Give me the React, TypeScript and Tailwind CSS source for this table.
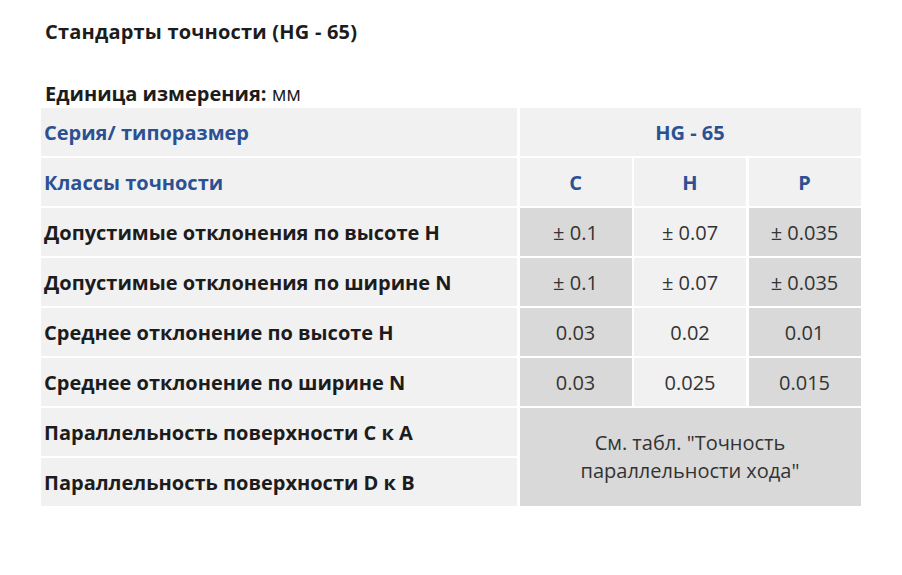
const labels = [
  "Допустимые отклонения по высоте H",
  "Допустимые отклонения по ширине N",
  "Среднее отклонение по высоте H",
  "Среднее отклонение по ширине N",
];

const values = [
  ["± 0.1", "± 0.07", "± 0.035"],
  ["± 0.1", "± 0.07", "± 0.035"],
  ["0.03", "0.02", "0.01"],
  ["0.03", "0.025", "0.015"],
];

const light = "bg-[#f1f1f1]";
const dark = "bg-[#d9d9d9]";

export default function App() {
  return (
    <div
      className="w-[902px] h-[575px] bg-white text-[#1c1c1c]"
      style={{ fontFamily: "'Open Sans', Lato, sans-serif" }}
    >
      <div className="pl-[45px] pt-[20px] text-[20px]">
        <h2 className="font-bold leading-[24px] tracking-[0.2px]">
          Стандарты точности (HG - 65)
        </h2>
        <p className="mt-[39px] leading-[22px]">
          <span className="font-bold">Единица измерения:</span> мм
        </p>
      </div>

      <div className="ml-[41px] mt-[3px] grid grid-cols-[476px_112px_112px_112px] auto-rows-[47.5px] gap-[2.5px] w-[820px] text-[20px]">
        <div className={`${light} flex items-center pl-[3px] pt-[2px] font-bold text-[#2c5193]`}>
          Серия/ типоразмер
        </div>
        <div className={`${light} col-span-3 flex items-center justify-center pt-[2px] font-bold text-[#2c5193]`}>
          HG - 65
        </div>

        <div className={`${light} flex items-center pl-[3px] pt-[2px] font-bold text-[#2c5193]`}>
          Классы точности
        </div>
        {["C", "H", "P"].map((c) => (
          <div key={c} className={`${light} flex items-center justify-center pt-[2px] font-bold text-[#2c5193]`}>
            {c}
          </div>
        ))}

        {labels.map((label, i) => (
          <div key={label} className="contents">
            <div className={`${light} flex items-center pl-[3px] pt-[2px] font-bold`}>{label}</div>
            {values[i].map((v, j) => (
              <div
                key={j}
                className={`${j === 1 ? light : dark} flex items-center justify-center pt-[2px] text-[#333]`}
              >
                {v}
              </div>
            ))}
          </div>
        ))}

        <div className={`${light} flex items-center pl-[3px] pt-[2px] font-bold`}>
          Параллельность поверхности C к A
        </div>
        <div className={`${dark} col-span-3 row-span-2 flex items-center justify-center pt-[1px] text-center leading-[28px] text-[#333]`}>
          См. табл. "Точность
          <br />
          параллельности хода"
        </div>
        <div className={`${light} flex items-center pl-[3px] pt-[2px] font-bold`}>
          Параллельность поверхности D к B
        </div>
      </div>
    </div>
  );
}
